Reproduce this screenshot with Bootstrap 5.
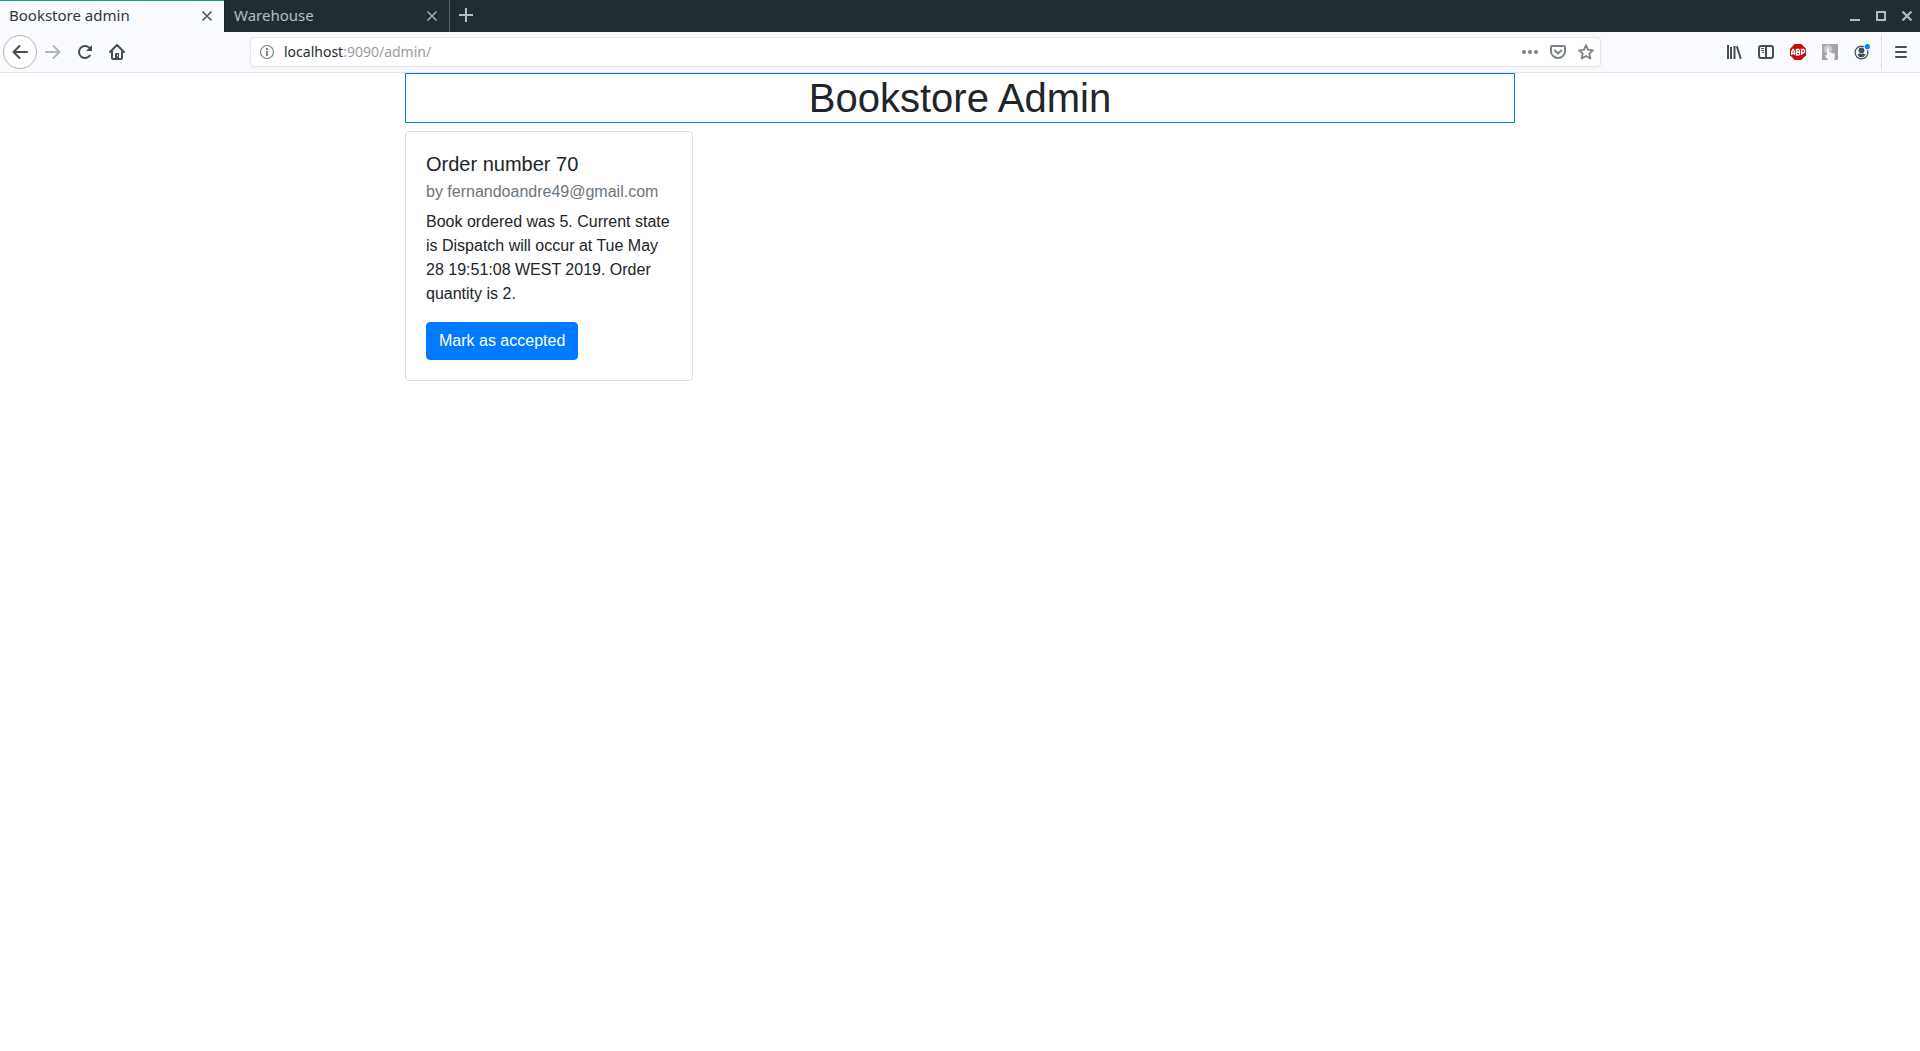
<!DOCTYPE html>
<html lang="en">
<head>
<meta charset="utf-8">
<meta name="viewport" content="width=device-width, initial-scale=1">
<title>Bookstore admin</title>
<link rel="stylesheet" href="https://cdn.jsdelivr.net/npm/bootstrap@5.3.0/dist/css/bootstrap.min.css">
<style>
  body { font-family: "Liberation Sans", Arial, sans-serif; color: #212529; background: #fff; }
  .chrome { font-family: "Noto Sans", sans-serif; font-size: 15px; line-height: 20px; }
  .chrome button { padding: 0; border: 0; background: transparent; color: inherit; }
  .chrome svg { display: block; fill: none; stroke: currentColor; }

  /* Tab strip */
  .tab-strip { height: 32px; background: #222d32; color: #b5bec4; }
  .browser-tab { width: 225px; padding: 0 9px 2px; border-right: 1px solid #59646a; }
  .browser-tab.current { background: #fafbfe; color: #2c383e; border-right-color: #1a2327; box-shadow: inset 0 1px #16a085; }
  .browser-tab a { color: inherit; text-decoration: none; }
  .chrome .tab-close { width: 16px; height: 16px; padding-top: 1px; opacity: .85; }
  .tab-new { width: 32px; }
  .window-button { width: 26px; height: 32px; }

  /* Navigation toolbar */
  .toolbar { height: 41px; padding: 0 3px; background: #fafbfe; color: #434f54; border-bottom: 1px solid #e2e5e8; }
  .tool { width: 32px; height: 32px; }
  .chrome .tool-back { width: 34px; height: 34px; border: 1px solid #b0b1b3; border-radius: 50%; background: #fff; }
  .chrome .tool:disabled { color: #b2b5b8; }
  .spacer { flex: 0 1 117px; }
  .address { height: 30px; padding-left: 2px; font-size: 14px; background: #fff; border: 1px solid #e4e6ea; border-radius: 4px; box-shadow: 0 1px 3px rgba(0, 0, 0, .04); color: #7a8487; }
  .address label { margin-left: 3px; color: #222d32; }
  .address input { border: 0; padding: 0; outline: 0; background: transparent; color: #999b9d; min-width: 0; }
  .address-tool { width: 28px; height: 28px; }
  .separator { width: 1px; height: 34px; margin: 0 3px; background: #d9dbde; }

  /* Page */
  .page { max-width: 1140px; padding: 0 15px; }
  .page-title { font-size: 40px; line-height: 48px; border: 1px solid #007bff; }
  .order { width: 288px; border-color: #dfdfdf; border-radius: 4px; }
  .order .card-body { padding: 20px; }
  .order .card-title { font-size: 20px; line-height: 24px; margin-bottom: 6px; }
  .order .card-subtitle { font-size: 16px; line-height: 20px; margin: 0 0 8px; color: #6c757d; }
  .order .btn { --bs-btn-bg: #007bff; --bs-btn-border-color: #007bff; border-radius: 4px; }
</style>
<script src="https://cdn.jsdelivr.net/npm/bootstrap@5.3.0/dist/js/bootstrap.bundle.min.js"></script>
</head>
<body>
<header class="chrome">
  <div class="tab-strip d-flex">
    <div class="browser-tab current d-flex align-items-center justify-content-between">
      <a href="#">Bookstore admin</a>
      <button class="tab-close" type="button" aria-label="Close Bookstore admin"><svg width="16" height="16" viewBox="0 0 16 16" stroke-width="1.600"><path d="M3.500 3.500l9 9M12.500 3.500l-9 9"/></svg></button>
    </div>
    <div class="browser-tab d-flex align-items-center justify-content-between">
      <a href="#">Warehouse</a>
      <button class="tab-close" type="button" aria-label="Close Warehouse"><svg width="16" height="16" viewBox="0 0 16 16" stroke-width="1.600"><path d="M3.500 3.500l9 9M12.500 3.500l-9 9"/></svg></button>
    </div>
    <button class="tab-new d-flex align-items-center justify-content-center" type="button" aria-label="New tab"><svg width="16" height="16" viewBox="0 0 16 16" stroke-width="2"><path d="M8 0v14M1 7h14"/></svg></button>
    <div class="d-flex ms-auto">
      <button class="window-button d-flex align-items-center justify-content-center" type="button" aria-label="Minimize"><svg width="16" height="16" viewBox="0 0 16 16" stroke-width="2"><path d="M3 12h10"/></svg></button>
      <button class="window-button d-flex align-items-center justify-content-center" type="button" aria-label="Maximize"><svg width="16" height="16" viewBox="0 0 16 16" stroke-width="2"><path d="M4 4h8v8H4z"/></svg></button>
      <button class="window-button d-flex align-items-center justify-content-center" type="button" aria-label="Close window"><svg width="16" height="16" viewBox="0 0 16 16" stroke-width="2.200"><path d="M3.500 3.500l9 9M12.500 3.500l-9 9"/></svg></button>
    </div>
  </div>

  <nav class="toolbar d-flex align-items-center" aria-label="Navigation">
    <button class="tool-back d-flex flex-shrink-0 align-items-center justify-content-center" type="button" aria-label="Back"><svg width="16" height="16" viewBox="0 0 16 16" stroke-width="2" stroke-linecap="round" stroke-linejoin="round"><path d="M15 8H1.500M7.500 2l-6 6 6 6"/></svg></button>
    <button class="tool d-flex flex-shrink-0 align-items-center justify-content-center" type="button" aria-label="Forward" disabled><svg width="16" height="16" viewBox="0 0 16 16" stroke-width="2" stroke-linecap="round" stroke-linejoin="round"><path d="M1 8h13.500M8.500 2l6 6-6 6"/></svg></button>
    <button class="tool d-flex flex-shrink-0 align-items-center justify-content-center" type="button" aria-label="Reload"><svg width="16" height="16" viewBox="0 0 16 16" stroke-width="2" stroke-linecap="round"><path d="M12.800 11.600A6 6 0 1 1 12 3.500l1.500 1.500"/><path d="M15 1v6H9z" fill="currentColor" stroke="none"/></svg></button>
    <button class="tool d-flex flex-shrink-0 align-items-center justify-content-center" type="button" aria-label="Home"><svg width="16" height="16" viewBox="0 0 16 16" stroke-width="2" stroke-linecap="round" stroke-linejoin="round"><path d="M1 8l7-7 7 7M3 7.500V14q0 1 1 1h8q1 0 1-1V7.500"/><path d="M6 15v-5q0-1 1-1h2q1 0 1 1v5z" fill="currentColor" stroke="none"/><path d="M8.500 11v1" stroke="#fafbfe" stroke-width="1"/></svg></button>
    <div class="spacer"></div>
    <form class="address d-flex flex-grow-1 align-items-center">
      <button class="address-tool d-flex flex-shrink-0 align-items-center justify-content-center" type="button" aria-label="Site information"><svg width="16" height="16" viewBox="0 0 16 16"><circle cx="8" cy="8" r="6.500" stroke-width="1.200"/><path d="M8 7v5M8 4v2" stroke-width="2"/></svg></button>
      <label for="address-rest">localhost</label>
      <input id="address-rest" class="flex-grow-1" type="text" value=":9090/admin/">
      <button class="address-tool d-flex flex-shrink-0 align-items-center justify-content-center" type="button" aria-label="Page actions"><svg width="16" height="16" viewBox="0 0 16 16"><g fill="currentColor" stroke="none"><circle cx="2" cy="8" r="2"/><circle cx="8" cy="8" r="2"/><circle cx="14" cy="8" r="2"/></g></svg></button>
      <button class="address-tool d-flex flex-shrink-0 align-items-center justify-content-center" type="button" aria-label="Save to Pocket"><svg width="16" height="16" viewBox="0 0 16 16" stroke-width="2" stroke-linecap="round" stroke-linejoin="round"><path d="M2 2h12q1 0 1 1v4.500a7 6.500 0 0 1-14 0V3q0-1 1-1zM4.800 6.500L8 9.500l3.200-3"/></svg></button>
      <button class="address-tool d-flex flex-shrink-0 align-items-center justify-content-center" type="button" aria-label="Bookmark this page"><svg width="16" height="16" viewBox="0 0 16 16" stroke-width="1.800" stroke-linejoin="round"><path d="M8 1.200l2 4.700 5 .4-3.800 3.300 1.200 5L8 12l-4.400 2.600 1.200-5L1 6.300l5-.4z"/></svg></button>
    </form>
    <div class="spacer"></div>
    <button class="tool d-flex flex-shrink-0 align-items-center justify-content-center" type="button" aria-label="Library"><svg width="16" height="16" viewBox="0 0 16 16" stroke-width="2"><path d="M2 1v14M5 3v12M8.500 2v13M10.800 2.200l4 12.500"/></svg></button>
    <button class="tool d-flex flex-shrink-0 align-items-center justify-content-center" type="button" aria-label="Sidebars"><svg width="16" height="16" viewBox="0 0 16 16" stroke-width="2"><rect x="1" y="2" width="14" height="12" rx="2"/><path d="M8 2v12"/><path d="M3 4.500h3M3 6.500h3M4 8.500h2" stroke-width="1"/></svg></button>
    <button class="tool d-flex flex-shrink-0 align-items-center justify-content-center" type="button" aria-label="Adblock Plus"><svg width="16" height="16" viewBox="0 0 16 16"><path d="M4.700 0h6.600L16 4.700v6.600L11.300 16H4.700L0 11.300V4.700z" fill="#c70d0c" stroke="none"/><path d="M1.700 11V8l1.100-2.500h.5L4.600 8v3M1.700 9.200h2.900M6.600 5.500V11h2.200l.7-.7V8.900l-.8-.7.6-.7V6.200l-.7-.7zM6.600 8.200h2M11.600 11V5.500h2l.9.800v1.700l-.9.800h-2" stroke="#fff" stroke-width="1.400"/></svg></button>
    <button class="tool d-flex flex-shrink-0 align-items-center justify-content-center" type="button" aria-label="Touch simulation"><svg width="16" height="16" viewBox="0 0 16 16"><g stroke="none"><rect width="16" height="16" rx="1" fill="#a2a2a2"/><circle cx="6" cy="5" r="4.500" fill="#c4c4c4"/><circle cx="6" cy="5" r="2.600" fill="#d6d6d6"/><path d="M5 5q1-1.500 2 0v3.500l1-.3 1 .8 1-.4 1 .9 1-.3q1 .4.900 1.600L12.300 16H6.200L3 12q0-1.500 1.500-.8L5 11.500z" fill="#f5f9fc"/></g></svg></button>
    <button class="tool d-flex flex-shrink-0 align-items-center justify-content-center" type="button" aria-label="Account"><svg width="16" height="16" viewBox="0 0 16 16"><circle cx="7.500" cy="8.500" r="6.400" stroke-width="1.200"/><circle cx="7.500" cy="6.300" r="2.900" fill="currentColor" stroke="none"/><path d="M3.200 10.500q1.300-.3 2.500-1.300 1.800 1 3.600 0 1.200 1 2.500 1.300-1.500 2.700-4.300 2.700t-4.300-2.700z" fill="currentColor" stroke="none"/><circle cx="13.300" cy="2.700" r="3.500" fill="#fafbfe" stroke="none"/><circle cx="13.300" cy="2.700" r="2.600" fill="#0a84ff" stroke="none"/></svg></button>
    <div class="separator flex-shrink-0"></div>
    <button class="tool d-flex flex-shrink-0 align-items-center justify-content-center" type="button" aria-label="Open menu"><svg width="16" height="16" viewBox="0 0 16 16" stroke-width="2" stroke-linecap="round"><path d="M3 3h10M3 8h10M3 13h10"/></svg></button>
  </nav>
</header>

<main class="page container">
  <h1 class="page-title text-center fw-normal mb-2">Bookstore Admin</h1>
  <article class="order card">
    <div class="card-body">
      <h5 class="card-title fw-normal">Order number 70</h5>
      <h6 class="card-subtitle fw-normal">by fernandoandre49@gmail.com</h6>
      <p class="card-text mb-3">Book ordered was 5. Current state is Dispatch will occur at Tue May 28 19:51:08 WEST 2019. Order quantity is 2.</p>
      <button class="btn btn-primary" type="button">Mark as accepted</button>
    </div>
  </article>
</main>
</body>
</html>
